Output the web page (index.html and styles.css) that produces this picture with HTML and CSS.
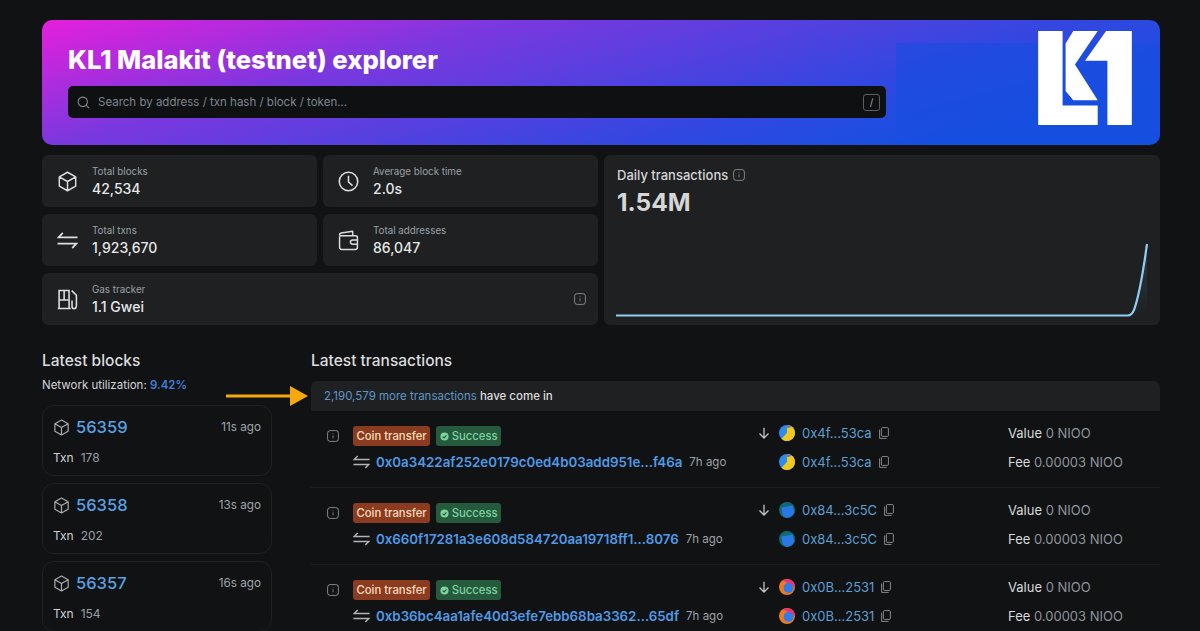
FILE: index.html
```html
<!DOCTYPE html>
<html lang="en">
<head>
<meta charset="utf-8">
<title>KL1 Malakit (testnet) explorer</title>
<link rel="stylesheet" href="styles.css">
</head>
<body>
<svg class="defs" width="0" height="0" aria-hidden="true">
  <defs>
    <symbol id="cube" viewBox="0 0 20 20"><path d="M10 1.200 17.800 5.600V14.400L10 18.800 2.200 14.400V5.600Z M2.200 5.600 10 10 17.800 5.600 M10 10V18.800" fill="none" stroke="currentColor" stroke-width="1.400" stroke-linejoin="round"/></symbol>
    <symbol id="swap" viewBox="0 0 20 16"><path d="M5.500 .8 1.500 5H19.500 M14.500 15.200 18.500 11H.5" fill="none" stroke="currentColor" stroke-width="1.700"/></symbol>
    <symbol id="clock" viewBox="0 0 20 20"><circle cx="10" cy="10" r="8.800" fill="none" stroke="currentColor" stroke-width="1.500"/><path d="M10 4.500V10.500L13.800 14" fill="none" stroke="currentColor" stroke-width="1.500"/></symbol>
    <symbol id="wallet" viewBox="0 0 20 20"><path d="M1.500 6V16.500Q1.500 18.500 3.500 18.500H16.500Q18.500 18.500 18.500 16.500V7Q18.500 5.500 16.500 5.500H3.500Q1.500 5.500 1.500 4 1.500 3 3 2.800L14 1.200V5.500 M18.500 9.500H14Q11.800 9.500 11.800 11.500 11.800 13.500 14 13.500H18.500" fill="none" stroke="currentColor" stroke-width="1.400" stroke-linejoin="round"/></symbol>
    <symbol id="gas" viewBox="0 0 20 20"><path d="M.8 18.500H13 M2 18.500V1.500H11.500V18.500 M2 10.500H11.500 M6.800 1.500V10.500 M14 1.500 18.500 6V15.500Q18.500 18.800 16.300 18.800 14.300 18.800 14.300 16.500V11" fill="none" stroke="currentColor" stroke-width="1.500"/></symbol>
    <symbol id="info" viewBox="0 0 12 12"><rect x=".6" y=".6" width="10.800" height="10.800" rx="2.600" fill="none" stroke="currentColor"/><path d="M6 5.400V8.400 M6 3.400V4.200" stroke="currentColor" stroke-width=".9"/></symbol>
    <symbol id="copy" viewBox="0 0 10 12"><path d="M.6 2.500V11.400H7.600" fill="none" stroke="currentColor" stroke-width="1"/><rect x="2.400" y=".6" width="7" height="8.800" rx="1" fill="none" stroke="currentColor" stroke-width="1"/></symbol>
    <symbol id="down" viewBox="0 0 12 12"><path d="M6 .8V11 M1.500 6.500 6 11 10.500 6.500" fill="none" stroke="currentColor" stroke-width="1.300"/></symbol>
    <symbol id="ava-a" viewBox="0 0 16 16"><circle cx="8" cy="8" r="8" fill="#2b8cf0"/><path d="M8 8V0A8 8 0 0 1 16 8Z" fill="#f2c81e"/><path d="M8 8H16A8 8 0 0 1 2.500 13.800Z" fill="#f2c81e"/><path d="M8 0A8 8 0 0 1 13 1.800L9.500 3 8 3Z" fill="#7a7490"/></symbol>
    <symbol id="ava-b" viewBox="0 0 16 16"><circle cx="8" cy="8" r="8" fill="#0e6b72"/><path d="M2.500 5.500 13.500 3.500 15.500 10.500Q13 15.500 7 16L3.500 13Z" fill="#2a78e6"/></symbol>
    <symbol id="ava-c" viewBox="0 0 16 16"><circle cx="8" cy="8" r="8" fill="#f07a1e"/><path d="M4 1.200A8 8 0 0 1 16 8L12 6Z" fill="#ee2f7f"/><circle cx="9.500" cy="9" r="4.900" fill="#2f7cea"/></symbol>
  </defs>
</svg>

<header class="hero">
  <div class="hero-main">
    <h1 class="hero-title">KL1 Malakit (testnet) explorer</h1>
    <div class="search">
      <svg class="search-icon" viewBox="0 0 14 14"><circle cx="6.200" cy="6.200" r="5" fill="none" stroke="currentColor" stroke-width="1.100"/><path d="M10 10 13 13" stroke="currentColor" stroke-width="1.100"/></svg>
      <span class="search-text">Search by address / txn hash / block / token...</span>
      <span class="slash">/</span>
    </div>
  </div>
  <svg class="logo" viewBox="0 0 280 281"><path fill="#fff" d="M0 0H73V223H178V281H0Z M105 0H178L110 100 178 207H105L82 179V37Z M140 89 203 0H280V281H207V89Z"/></svg>
</header>

<section class="stats">
  <div class="stat">
    <svg class="stat-icon"><use href="#cube"/></svg>
    <div><div class="stat-label">Total blocks</div><div class="stat-value">42,534</div></div>
  </div>
  <div class="stat">
    <svg class="stat-icon"><use href="#clock"/></svg>
    <div><div class="stat-label">Average block time</div><div class="stat-value">2.0s</div></div>
  </div>
  <div class="chart-card">
    <div class="chart-title">Daily transactions <svg class="info-sm"><use href="#info"/></svg></div>
    <div class="chart-value">1.54M</div>
    <svg class="chart" viewBox="0 0 532 74" preserveAspectRatio="none">
      <defs><linearGradient id="fade" x1="0" y1="0" x2="0" y2="1"><stop offset="0" stop-color="#90cdf4" stop-opacity=".16"/><stop offset="1" stop-color="#90cdf4" stop-opacity="0"/></linearGradient></defs>
      <path d="M517 70C523 58 527 30 531 1V72H517Z" fill="url(#fade)"/>
      <path d="M0 72.500H512Q515.500 72.500 518 67C522 56 527 30 531 1" fill="none" stroke="#8fcdf2" stroke-width="2.200"/>
    </svg>
  </div>
  <div class="stat">
    <svg class="stat-icon"><use href="#swap"/></svg>
    <div><div class="stat-label">Total txns</div><div class="stat-value">1,923,670</div></div>
  </div>
  <div class="stat">
    <svg class="stat-icon"><use href="#wallet"/></svg>
    <div><div class="stat-label">Total addresses</div><div class="stat-value">86,047</div></div>
  </div>
  <div class="stat stat-wide">
    <svg class="stat-icon"><use href="#gas"/></svg>
    <div><div class="stat-label">Gas tracker</div><div class="stat-value">1.1 Gwei</div></div>
    <svg class="info-sm info-end"><use href="#info"/></svg>
  </div>
</section>

<main class="main">
  <section class="blocks">
    <h2 class="section-title">Latest blocks</h2>
    <div class="util">Network utilization: <b>9.42%</b></div>
    <div class="block-card">
      <div class="block-top"><svg class="block-icon"><use href="#cube"/></svg><a class="block-num">56359</a><span class="block-time">11s ago</span></div>
      <div class="block-txn"><b>Txn</b><span>178</span></div>
    </div>
    <div class="block-card">
      <div class="block-top"><svg class="block-icon"><use href="#cube"/></svg><a class="block-num">56358</a><span class="block-time">13s ago</span></div>
      <div class="block-txn"><b>Txn</b><span>202</span></div>
    </div>
    <div class="block-card">
      <div class="block-top"><svg class="block-icon"><use href="#cube"/></svg><a class="block-num">56357</a><span class="block-time">16s ago</span></div>
      <div class="block-txn"><b>Txn</b><span>154</span></div>
    </div>
  </section>

  <section class="txs">
    <h2 class="section-title tx-title">Latest transactions</h2>
    <div class="banner">
      <svg class="pointer" viewBox="0 0 82 20"><path d="M0 8.500H64V0L82 10 64 20V11.500H0Z" fill="#f5a90f"/></svg>
      <a>2,190,579 more transactions</a> have come in
    </div>

    <article class="tx">
      <div class="tx-left">
        <svg class="tx-info"><use href="#info"/></svg>
        <div>
          <div class="tags"><span class="tag tag-type">Coin transfer</span><span class="tag tag-ok"><svg class="check" viewBox="0 0 10 10"><circle cx="5" cy="5" r="4.500" fill="currentColor"/><path d="M3 5.100 4.500 6.600 7.200 3.800" fill="none" stroke="#255a3c" stroke-width="1.200"/></svg>Success</span></div>
          <div class="hash-line"><svg class="swap"><use href="#swap"/></svg><a class="hash">0x0a3422af252e0179c0ed4b03add951e...f46a</a><span class="ago">7h ago</span></div>
        </div>
      </div>
      <div class="tx-mid">
        <div class="addr"><svg class="down"><use href="#down"/></svg><svg class="ava"><use href="#ava-a"/></svg><a>0x4f...53ca</a><svg class="copy"><use href="#copy"/></svg></div>
        <div class="addr addr-to"><svg class="ava"><use href="#ava-a"/></svg><a>0x4f...53ca</a><svg class="copy"><use href="#copy"/></svg></div>
      </div>
      <div class="tx-right">
        <div class="amount"><b>Value</b> 0 NIOO</div>
        <div class="amount"><b>Fee</b> 0.00003 NIOO</div>
      </div>
    </article>

    <article class="tx">
      <div class="tx-left">
        <svg class="tx-info"><use href="#info"/></svg>
        <div>
          <div class="tags"><span class="tag tag-type">Coin transfer</span><span class="tag tag-ok"><svg class="check" viewBox="0 0 10 10"><circle cx="5" cy="5" r="4.500" fill="currentColor"/><path d="M3 5.100 4.500 6.600 7.200 3.800" fill="none" stroke="#255a3c" stroke-width="1.200"/></svg>Success</span></div>
          <div class="hash-line"><svg class="swap"><use href="#swap"/></svg><a class="hash">0x660f17281a3e608d584720aa19718ff1...8076</a><span class="ago">7h ago</span></div>
        </div>
      </div>
      <div class="tx-mid">
        <div class="addr"><svg class="down"><use href="#down"/></svg><svg class="ava"><use href="#ava-b"/></svg><a>0x84...3c5C</a><svg class="copy"><use href="#copy"/></svg></div>
        <div class="addr addr-to"><svg class="ava"><use href="#ava-b"/></svg><a>0x84...3c5C</a><svg class="copy"><use href="#copy"/></svg></div>
      </div>
      <div class="tx-right">
        <div class="amount"><b>Value</b> 0 NIOO</div>
        <div class="amount"><b>Fee</b> 0.00003 NIOO</div>
      </div>
    </article>

    <article class="tx">
      <div class="tx-left">
        <svg class="tx-info"><use href="#info"/></svg>
        <div>
          <div class="tags"><span class="tag tag-type">Coin transfer</span><span class="tag tag-ok"><svg class="check" viewBox="0 0 10 10"><circle cx="5" cy="5" r="4.500" fill="currentColor"/><path d="M3 5.100 4.500 6.600 7.200 3.800" fill="none" stroke="#255a3c" stroke-width="1.200"/></svg>Success</span></div>
          <div class="hash-line"><svg class="swap"><use href="#swap"/></svg><a class="hash">0xb36bc4aa1afe40d3efe7ebb68ba3362...65df</a><span class="ago">7h ago</span></div>
        </div>
      </div>
      <div class="tx-mid">
        <div class="addr"><svg class="down"><use href="#down"/></svg><svg class="ava"><use href="#ava-c"/></svg><a>0x0B...2531</a><svg class="copy"><use href="#copy"/></svg></div>
        <div class="addr addr-to"><svg class="ava"><use href="#ava-c"/></svg><a>0x0B...2531</a><svg class="copy"><use href="#copy"/></svg></div>
      </div>
      <div class="tx-right">
        <div class="amount"><b>Value</b> 0 NIOO</div>
        <div class="amount"><b>Fee</b> 0.00003 NIOO</div>
      </div>
    </article>
  </section>
</main>
</body>
</html>
```

FILE: styles.css
```css
* { box-sizing: border-box; }
html, body { height: 631px; overflow: hidden; }
body {
  margin: 0;
  padding: 20px 40px 0 42px;
  background: #101214;
  color: #d8d9db;
  font-family: Inter, "Liberation Sans", sans-serif;
}
a { color: inherit; text-decoration: none; }
.defs { position: absolute; }

/* hero */
.hero {
  position: relative;
  display: flex;
  justify-content: space-between;
  height: 125px;
  padding: 11px 28px 0 26px;
  border-radius: 10px;
  overflow: hidden;
  background: linear-gradient(165deg, #e61fdc 0%, #7a38df 30%, #2f48e0 68%, #1650e0 85%);
}
.hero::before {
  content: "";
  position: absolute;
  left: 854px;
  top: 23px;
  right: 0;
  bottom: 0;
  background: #184de0;
  opacity: .6;
  -webkit-mask-image: linear-gradient(to bottom, #000 70%, transparent);
  mask-image: linear-gradient(to bottom, #000 70%, transparent);
}
.hero-main { position: relative; width: 818px; }
.hero-title {
  margin: 13px 0 10px;
  color: #fff;
  font-family: Inter, sans-serif;
  font-size: 25.6px;
  font-weight: 800;
  line-height: 32px;
}
.search {
  display: flex;
  align-items: center;
  height: 32px;
  padding: 0 6px 0 9px;
  border-radius: 5px;
  background: #0e1012;
  color: #7f868e;
  font-size: 11.5px;
}
.search-icon { width: 13px; height: 13px; margin-right: 8px; color: #8a9097; }
.search-text { flex: 1; }
.slash {
  width: 17px;
  height: 17px;
  border: 1px solid #5a5f65;
  border-radius: 3px;
  color: #a2a6ab;
  font-size: 10px;
  line-height: 15px;
  text-align: center;
}
.logo { position: relative; width: 94px; height: 94px; }

/* stats */
.stats {
  display: grid;
  grid-template-columns: 275px 275px 556px;
  grid-template-rows: 52px 52px 52px;
  gap: 7px 6px;
  margin-top: 10px;
}
.stat {
  display: flex;
  align-items: center;
  gap: 14px;
  padding: 0 16px 0 15px;
  border-radius: 6px;
  background: #1e2022;
}
.stat-wide { grid-column: 1 / span 2; }
.stat-icon { flex: none; width: 21px; height: 21px; color: #dcdddf; }
.stat-label { margin-top: 1px; color: #9ba0a6; font-size: 9.8px; line-height: 14px; }
.stat-value { color: #e6e7e8; font-size: 14px; font-weight: 500; line-height: 19px; }
.info-sm { width: 12px; height: 12px; color: #80858b; }
.info-end { margin-left: auto; margin-right: -4px; }

.chart-card {
  display: flex;
  flex-direction: column;
  grid-column: 3;
  grid-row: 1 / span 3;
  padding: 11px 12px 8px;
  border-radius: 6px;
  background: #1e2022;
}
.chart-title {
  display: flex;
  align-items: center;
  gap: 5px;
  padding-left: 1px;
  color: #d4d5d7;
  font-size: 13px;
  font-weight: 500;
  line-height: 18px;
}
.chart-value {
  padding-left: 1px;
  margin-top: 3px;
  color: #d6d6d6;
  font-size: 24.5px;
  font-weight: 700;
  line-height: 30px;
}
.chart { display: block; width: 532px; height: 74px; margin-top: auto; }

/* main columns */
.main { display: flex; gap: 39px; margin-top: 24px; }
.blocks { flex: none; width: 230px; }
.txs { flex: 1; min-width: 0; }
.section-title {
  margin: 0;
  color: #dcdddf;
  font-size: 15.5px;
  font-weight: 500;
  line-height: 24px;
}
.util { margin: 3px 0 11px; color: #d4d5d7; font-size: 11.5px; line-height: 18px; }
.util b { color: #3f80d8; font-weight: 600; }

.block-card {
  height: 71px;
  margin-bottom: 7px;
  padding: 11px 10px 0 10px;
  border: 1px solid #1e2023;
  border-radius: 12px;
}
.block-top { display: flex; align-items: center; height: 20px; }
.block-icon { width: 17px; height: 17px; margin-right: 6px; color: #a8acb0; }
.block-num { color: #58a2e4; font-size: 16.5px; font-weight: 500; }
.block-time { margin-left: auto; color: #a0a4a9; font-size: 11.7px; }
.block-txn { display: flex; gap: 7px; margin-top: 13px; color: #9a9ea3; font-size: 12px; line-height: 16px; }
.block-txn b { color: #d0d1d3; font-weight: 400; }

/* transactions */
.tx-title { margin-bottom: 8px; }
.banner {
  position: relative;
  height: 30px;
  padding-left: 13px;
  border-radius: 6px 6px 0 0;
  background: #1e2022;
  color: #dcdddf;
  font-size: 11.5px;
  font-weight: 500;
  line-height: 30px;
}
.banner a { color: #5e96c6; font-weight: 400; }
.pointer { position: absolute; left: -85px; top: 5px; width: 82px; height: 20px; }

.tx {
  display: grid;
  grid-template-columns: 447px 250px 1fr;
  height: 77px;
  border-bottom: 1px solid #1c1e20;
}
.tx:last-child { border-bottom: 0; }
.tx-left { display: flex; gap: 14px; padding: 15px 0 0 16px; }
.tx-info { flex: none; width: 12px; height: 12px; margin-top: 4px; color: #85898e; }
.tags { display: flex; gap: 6px; height: 20px; }
.tag {
  display: flex;
  align-items: center;
  padding: 0 3.5px;
  border-radius: 3px;
  font-size: 11.3px;
  font-weight: 500;
}
.tag-type { background: #8a3b20; color: #fddcbc; }
.tag-ok { gap: 3px; background: #255a3c; color: #7ed3a0; }
.check { width: 9px; height: 9px; }
.hash-line { display: flex; align-items: center; height: 20px; margin-top: 6px; }
.swap { width: 17px; height: 14px; margin-right: 6px; color: #b0b3b7; }
.hash { color: #4f9ae6; font-size: 13.3px; font-weight: 600; }
.ago { margin-left: 7px; color: #9ea2a7; font-size: 11.5px; }

.tx-mid { display: flex; flex-direction: column; gap: 9px; padding-top: 12px; }
.addr { display: flex; align-items: center; height: 20px; color: #5e9fd2; font-size: 13px; }
.addr-to { padding-left: 21px; }
.down { width: 12px; height: 12px; margin-right: 9px; color: #c2c4c7; }
.ava { width: 16px; height: 16px; margin-right: 7px; }
.copy { width: 10px; height: 12px; margin-left: 7px; color: #85898e; }

.tx-right { display: flex; flex-direction: column; gap: 9px; padding-top: 12px; }
.amount { height: 20px; color: #8f959b; font-size: 13px; line-height: 20px; }
.amount b { color: #d8d9db; font-weight: 400; }
```
